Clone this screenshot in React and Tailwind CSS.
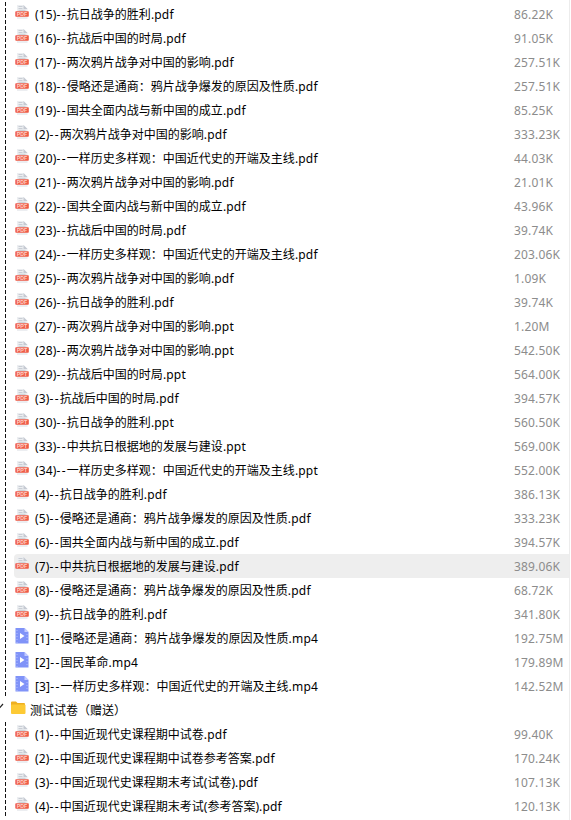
const files = [
  { name: "(15)--抗日战争的胜利.pdf", size: "86.22K" },
  { name: "(16)--抗战后中国的时局.pdf", size: "91.05K" },
  { name: "(17)--两次鸦片战争对中国的影响.pdf", size: "257.51K" },
  { name: "(18)--侵略还是通商：鸦片战争爆发的原因及性质.pdf", size: "257.51K" },
  { name: "(19)--国共全面内战与新中国的成立.pdf", size: "85.25K" },
  { name: "(2)--两次鸦片战争对中国的影响.pdf", size: "333.23K" },
  { name: "(20)--一样历史多样观：中国近代史的开端及主线.pdf", size: "44.03K" },
  { name: "(21)--两次鸦片战争对中国的影响.pdf", size: "21.01K" },
  { name: "(22)--国共全面内战与新中国的成立.pdf", size: "43.96K" },
  { name: "(23)--抗战后中国的时局.pdf", size: "39.74K" },
  { name: "(24)--一样历史多样观：中国近代史的开端及主线.pdf", size: "203.06K" },
  { name: "(25)--两次鸦片战争对中国的影响.pdf", size: "1.09K" },
  { name: "(26)--抗日战争的胜利.pdf", size: "39.74K" },
  { name: "(27)--两次鸦片战争对中国的影响.ppt", size: "1.20M" },
  { name: "(28)--两次鸦片战争对中国的影响.ppt", size: "542.50K" },
  { name: "(29)--抗战后中国的时局.ppt", size: "564.00K" },
  { name: "(3)--抗战后中国的时局.pdf", size: "394.57K" },
  { name: "(30)--抗日战争的胜利.ppt", size: "560.50K" },
  { name: "(33)--中共抗日根据地的发展与建设.ppt", size: "569.00K" },
  { name: "(34)--一样历史多样观：中国近代史的开端及主线.ppt", size: "552.00K" },
  { name: "(4)--抗日战争的胜利.pdf", size: "386.13K" },
  { name: "(5)--侵略还是通商：鸦片战争爆发的原因及性质.pdf", size: "333.23K" },
  { name: "(6)--国共全面内战与新中国的成立.pdf", size: "394.57K" },
  { name: "(7)--中共抗日根据地的发展与建设.pdf", size: "389.06K", active: true },
  { name: "(8)--侵略还是通商：鸦片战争爆发的原因及性质.pdf", size: "68.72K" },
  { name: "(9)--抗日战争的胜利.pdf", size: "341.80K" },
  { name: "[1]--侵略还是通商：鸦片战争爆发的原因及性质.mp4", size: "192.75M" },
  { name: "[2]--国民革命.mp4", size: "179.89M" },
  { name: "[3]--一样历史多样观：中国近代史的开端及主线.mp4", size: "142.52M" },
];

const testPapers = [
  { name: "(1)--中国近现代史课程期中试卷.pdf", size: "99.40K" },
  { name: "(2)--中国近现代史课程期中试卷参考答案.pdf", size: "170.24K" },
  { name: "(3)--中国近现代史课程期末考试(试卷).pdf", size: "107.13K" },
  { name: "(4)--中国近现代史课程期末考试(参考答案).pdf", size: "120.13K" },
];

function DocIcon({ label }) {
  return (
    <svg className="w-4 h-4 shrink-0" viewBox="0 0 16 16">
      <path d="M3 1h6.500L13.500 5v10H3z" fill="#eceef1" />
      <path d="M9.500 1l4 4h-4z" fill="#c5cad2" />
      <path d="M4.500 2.500h4M4.500 4.500h4M4.500 6.300h7" stroke="#c9ced5" strokeWidth="1" />
      <rect x="1.300" y="7.200" width="13.500" height="5.600" rx="0.800" fill="#ee5b47" />
      <text
        x="8"
        y="12"
        textAnchor="middle"
        fontSize="5.500"
        fontWeight="700"
        textLength="10.500"
        lengthAdjust="spacingAndGlyphs"
        fill="#ffd0c6"
        fontFamily="Liberation Sans, sans-serif"
      >
        {label}
      </text>
    </svg>
  );
}

function VideoIcon() {
  return (
    <svg className="w-4 h-4 shrink-0" viewBox="0 0 16 16">
      <path d="M1.500 0h9l4 4v11.500h-13z" fill="#8093f8" />
      <path d="M10.500 0l4 4h-4z" fill="#c3ccff" />
      <path d="M6 5l4.500 3L6 11z" fill="#fff" />
      <path d="M3 2v13M13 6v9" stroke="#b3befd" strokeWidth="1" strokeDasharray="1 2" />
    </svg>
  );
}

function FolderIcon() {
  return (
    <svg className="w-4 h-4 shrink-0" viewBox="0 0 16 16">
      <path d="M1 2.500q0-1 1-1h4l1.500 1.500H14q1 0 1 1V8H1z" fill="#eeb021" />
      <rect x="1" y="4.500" width="14.500" height="9.500" rx="1" fill="#fdca35" />
    </svg>
  );
}

function FileIcon({ name }) {
  if (name.endsWith(".mp4")) return <VideoIcon />;
  return <DocIcon label={name.endsWith(".ppt") ? "PPT" : "PDF"} />;
}

function FileRow({ name, size, active }) {
  // "(15)--title.pdf" -> index, title, extension
  const [index, rest] = name.split("--");
  const dot = rest.lastIndexOf(".");

  return (
    <div className="flex h-6 pl-[5px]">
      <div className="w-[9px] shrink-0 bg-[repeating-linear-gradient(to_bottom,#111_0_4px,transparent_4px_6px)] bg-[length:1px_100%] bg-no-repeat" />
      <div className={`flex flex-1 items-center rounded-l-sm ${active ? "bg-[#eeeeee]" : ""}`}>
        <div className="w-[21px] flex shrink-0 pb-1">
          <FileIcon name={name} />
        </div>
        <div className="flex-1 pt-0.5 whitespace-nowrap">
          <span className="tracking-[0.15px]">{index}</span>
          <span className="tracking-[1.3px]">--</span>
          <span>{rest.slice(0, dot)}</span>
          <span className="tracking-[0.2px]">{rest.slice(dot)}</span>
        </div>
        <div className="w-[55px] shrink-0 pt-0.5 whitespace-nowrap text-[#8c8c8c] tracking-[0.15px]">{size}</div>
      </div>
    </div>
  );
}

export default function App() {
  return (
    <div className="w-[571px] h-[820px] overflow-hidden bg-white">
      <div className="w-[570px] h-full pt-0.5 border-r border-[#ececec] text-xs text-black font-['Noto_Sans','Noto_Sans_CJK_SC',sans-serif]">
        {files.map((file) => (
          <FileRow key={file.name} {...file} />
        ))}

        {/* Folder */}
        <div className="flex items-center h-6">
          <svg className="w-2.5 h-4 shrink-0" viewBox="0 0 10 16">
            <path d="M-3 3l2.500 3L3 2" fill="none" stroke="#222" strokeWidth="1.200" />
          </svg>
          <div className="w-5 flex shrink-0 pb-1">
            <FolderIcon />
          </div>
          <span className="pt-0.5">测试试卷（赠送）</span>
        </div>

        {testPapers.map((file) => (
          <FileRow key={file.name} {...file} />
        ))}
      </div>
    </div>
  );
}
